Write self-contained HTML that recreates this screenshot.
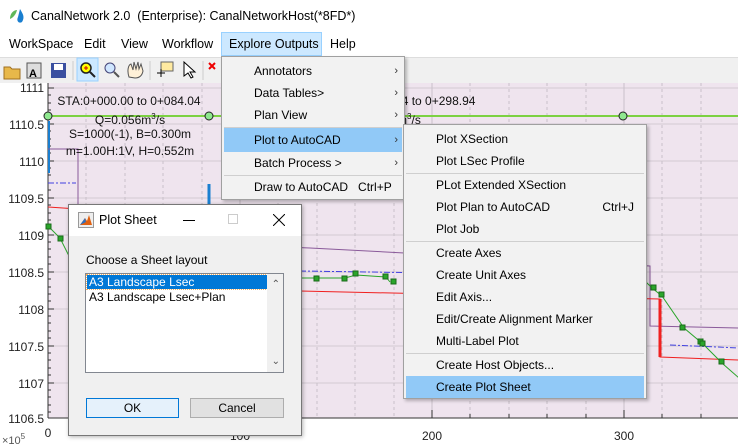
<!DOCTYPE html>
<html><head><meta charset="utf-8"><style>
*{margin:0;padding:0;box-sizing:border-box}
body{width:738px;height:445px;overflow:hidden;background:#fff;font-family:"Liberation Sans",sans-serif;font-size:12px;color:#000;position:relative}
.abs{position:absolute}
.menu{background:#f2f2f2;border:1px solid #a0a0a0;box-shadow:2px 2px 3px rgba(0,0,0,.25)}
.it{position:absolute;left:2px;right:2px;height:22px;line-height:22px;padding-left:30px;white-space:nowrap}
.hl{background:#91c9f7}
.sep{position:absolute;left:2px;right:2px;height:1px;background:#cfcfcf}
.arr{position:absolute;right:4px;top:0;color:#333;font-size:11px}
</style></head><body>
<div class="abs" style="left:0;top:0;width:738px;height:33px;background:#fff"></div>
<svg class="abs" style="left:8px;top:7px" width="18" height="18"><path d="M2 12 C2 5 7 3 9 3 C8 7 6 10 2 12Z" fill="#5fb85a"/><path d="M12 2 C15 7 17 10 14 15 C11 17 8 14 10 10 Z" fill="#1a7fd0"/></svg>
<div class="abs" style="left:31px;top:9px;font-size:12.5px">CanalNetwork 2.0&nbsp; (Enterprise): CanalNetworkHost(*8FD*)</div>
<div class="abs" style="left:0;top:33px;width:738px;height:24px;background:#fff"></div>
<div class="abs" style="left:221px;top:32px;width:101px;height:24px;background:#cce8ff;border:1px solid #99d1ff"></div>
<div class="abs" style="top:37px;left:9px;font-size:12.5px">WorkSpace</div>
<div class="abs" style="top:37px;left:84px;font-size:12.5px">Edit</div>
<div class="abs" style="top:37px;left:121px;font-size:12.5px">View</div>
<div class="abs" style="top:37px;left:162px;font-size:12.5px">Workflow</div>
<div class="abs" style="top:37px;left:229px;font-size:12.5px">Explore Outputs</div>
<div class="abs" style="top:37px;left:330px;font-size:12.5px">Help</div>
<div class="abs" style="left:0;top:57px;width:738px;height:26px;background:#f0f0f0;border-top:1px solid #ddd"></div>
<svg class="abs" style="left:0;top:57px" width="738" height="26">
<path d="M4 10h6l2 2h8v10H4z" fill="#e8b84a" stroke="#a07020"/>
<rect x="27" y="6" width="14" height="15" fill="#ddd" stroke="#555"/><text x="29" y="20" font-size="11" font-weight="bold" font-family="Liberation Sans">A</text>
<rect x="51" y="6" width="15" height="15" fill="#3a4fa0"/><rect x="54" y="7" width="9" height="6" fill="#fff"/>
<line x1="73" y1="4" x2="73" y2="23" stroke="#ccc"/>
<rect x="77" y="1" width="21" height="23" fill="#cce8ff" stroke="#99d1ff"/>
<circle cx="86" cy="11" r="5" fill="#ff0" stroke="#222" stroke-width="1.5"/><line x1="90" y1="15" x2="95" y2="20" stroke="#222" stroke-width="2"/><path d="M84 11h4M86 9v4" stroke="#c00"/>
<circle cx="110" cy="11" r="5" fill="#cfe6ff" stroke="#447"/><line x1="114" y1="15" x2="119" y2="20" stroke="#555" stroke-width="2"/>
<path d="M129 20 C127 14 128 8 131 7 L133 13 L134 5 L136 12 L138 5 L139 12 L141 7 L143 14 C142 19 139 21 135 21Z" fill="#fff1d8" stroke="#555"/>
<line x1="150" y1="4" x2="150" y2="23" stroke="#ccc"/>
<rect x="161" y="5" width="12" height="9" fill="#ffeaa0" stroke="#666"/><path d="M157 16h8M161 12v8" stroke="#000"/>
<path d="M184 5 L184 19 L188 16 L191 21 L193 20 L190 15 L195 15Z" fill="#fff" stroke="#000"/>
<line x1="203" y1="4" x2="203" y2="23" stroke="#ccc"/>
<path d="M209 6l6 6M215 6l-6 6" stroke="#e00" stroke-width="2"/>
</svg>
<svg class="abs" style="left:0;top:83px" width="738" height="362">
<rect x="48" y="0" width="690" height="335" fill="#efe4ee"/>
<g stroke="#d3cad3" stroke-width="1">
<line x1="48" x2="738" y1="5" y2="5"/><line x1="48" x2="738" y1="41" y2="41"/><line x1="48" x2="738" y1="78" y2="78"/><line x1="48" x2="738" y1="115" y2="115"/><line x1="48" x2="738" y1="152" y2="152"/><line x1="48" x2="738" y1="189" y2="189"/><line x1="48" x2="738" y1="226" y2="226"/><line x1="48" x2="738" y1="263" y2="263"/><line x1="48" x2="738" y1="300" y2="300"/>
</g>
<g stroke="#c9c0c9" stroke-dasharray="3,3">
<line x1="86" x2="86" y1="0" y2="335"/><line x1="125" x2="125" y1="0" y2="335"/><line x1="163" x2="163" y1="0" y2="335"/><line x1="202" x2="202" y1="0" y2="335"/><line x1="240" x2="240" y1="0" y2="335" stroke-dasharray="none"/><line x1="278" x2="278" y1="0" y2="335"/><line x1="317" x2="317" y1="0" y2="335"/><line x1="355" x2="355" y1="0" y2="335"/><line x1="394" x2="394" y1="0" y2="335"/><line x1="432" x2="432" y1="0" y2="335" stroke-dasharray="none"/><line x1="470" x2="470" y1="0" y2="335"/><line x1="509" x2="509" y1="0" y2="335"/><line x1="547" x2="547" y1="0" y2="335"/><line x1="586" x2="586" y1="0" y2="335"/><line x1="624" x2="624" y1="0" y2="335" stroke-dasharray="none"/><line x1="662" x2="662" y1="0" y2="335"/><line x1="701" x2="701" y1="0" y2="335"/>
</g>
<line x1="48" y1="0" x2="48" y2="335" stroke="#333"/>
<line x1="48" y1="335" x2="738" y2="335" stroke="#333"/>
<g stroke="#333"><path d="M48 5h6M48 12h3M48 20h3M48 27h3M48 34h3M48 41h6M48 48h3M48 56h3M48 63h3M48 70h3M48 78h6M48 85h3M48 92h3M48 100h3M48 107h3M48 115h6M48 122h3M48 130h3M48 137h3M48 144h3M48 152h6M48 159h3M48 166h3M48 174h3M48 181h3M48 189h6M48 196h3M48 204h3M48 211h3M48 218h3M48 226h6M48 233h3M48 240h3M48 248h3M48 255h3M48 263h6M48 270h3M48 277h3M48 285h3M48 292h3M48 300h6M48 307h3M48 314h3M48 322h3M48 329h3"/>
<path d="M240 335v-8M432 335v-8M624 335v-8M470 335v-4M509 335v-4M547 335v-4M586 335v-4M662 335v-4M701 335v-4"/></g>
<line x1="48" y1="33" x2="738" y2="33" stroke="#7cd142" stroke-width="2"/>
<circle cx="48" cy="33" r="4" fill="#8fe88f" stroke="#222"/><circle cx="209" cy="33" r="4" fill="#8fe88f" stroke="#222"/><circle cx="623" cy="33" r="4" fill="#8fe88f" stroke="#222"/>
<line x1="49" y1="38" x2="49" y2="90" stroke="#1a7fd0" stroke-width="2"/>
<line x1="209" y1="101" x2="209" y2="125" stroke="#1a7fd0" stroke-width="3"/>
<path d="M48 66h30v90L310 165l340 18v60l88 2" fill="none" stroke="#8a5a9a"/>
<path d="M48 100h28" stroke="#4040e0" stroke-dasharray="6,2,2,2"/>
<path d="M300 188l340 5M670 262l70 3" stroke="#4040e0" stroke-dasharray="6,2,2,2"/>
<path d="M48 124l30 2M300 208l360 8v58l78 3" fill="none" stroke="#f02020"/>
<path d="M660 216v58" stroke="#f02020" stroke-width="3"/>
<path d="M48 143l12 12l20 40M300 195l17 0l28 0l11-3l30 2l4 5M640 193l12 12l10 8l22 32l19 16l20 20l16 14" fill="none" stroke="#2aa52a"/>
<g fill="#2aa52a" stroke="#1a6a1a"><rect x="46" y="141" width="5" height="5"/><rect x="58" y="153" width="5" height="5"/><rect x="314" y="193" width="5" height="5"/><rect x="342" y="193" width="5" height="5"/><rect x="353" y="188" width="5" height="5"/><rect x="383" y="191" width="5" height="5"/><rect x="391" y="196" width="5" height="5"/><rect x="651" y="202" width="5" height="5"/><rect x="659" y="209" width="5" height="5"/><rect x="680" y="242" width="5" height="5"/><rect x="698" y="256" width="5" height="5"/><rect x="700" y="258" width="5" height="5"/><rect x="719" y="276" width="5" height="5"/></g>
<g font-family="Liberation Sans" font-size="12" text-anchor="end" fill="#222">
<text x="44" y="9">1111</text><text x="44" y="46">1110.5</text><text x="44" y="83">1110</text><text x="44" y="120">1109.5</text><text x="44" y="157">1109</text><text x="44" y="194">1108.5</text><text x="44" y="231">1108</text><text x="44" y="268">1107.5</text><text x="44" y="305">1107</text><text x="44" y="340">1106.5</text></g>
<g font-family="Liberation Sans" font-size="12" fill="#222" text-anchor="middle">
<text x="48" y="354">0</text><text x="240" y="357">100</text><text x="432" y="357">200</text><text x="624" y="357">300</text></g>
<text x="2" y="361" font-family="Liberation Sans" font-size="11" fill="#555">×10<tspan font-size="8" dy="-5">5</tspan></text>
<g font-family="Liberation Sans" font-size="12" fill="#111" text-anchor="middle">
<text x="129" y="22">STA:0+000.00 to 0+084.04</text>
<text x="130" y="41">Q=0.056m<tspan font-size="8" dy="-5">3</tspan><tspan dy="5">/s</tspan></text>
<text x="130" y="55">S=1000(-1), B=0.300m</text>
<text x="130" y="72">m=1.00H:1V, H=0.552m</text>
<text x="358" y="22" text-anchor="start">0+084.04 to 0+298.94</text>
<text x="367" y="41" text-anchor="start">0.050m<tspan font-size="8" dy="-5">3</tspan><tspan dy="5">/s</tspan></text>
</g>
</svg>
<div class="abs menu" style="left:221px;top:56px;width:184px;height:144px">
<div class="it" style="top:3px">Annotators<span class="arr">›</span></div>
<div class="it" style="top:25px">Data Tables&gt;<span class="arr">›</span></div>
<div class="it" style="top:47px">Plan View<span class="arr">›</span></div>
<div class="sep" style="top:70px"></div>
<div class="it hl" style="top:71px;height:24px;line-height:24px">Plot to AutoCAD<span class="arr">›</span></div>
<div class="it" style="top:95px">Batch Process &gt;<span class="arr">›</span></div>
<div class="sep" style="top:118px"></div>
<div class="it" style="top:119px">Draw to AutoCAD&nbsp;&nbsp; Ctrl+P</div>
</div>
<div class="abs menu" style="left:403px;top:124px;width:244px;height:275px">
<div class="it" style="top:3px">Plot XSection</div>
<div class="it" style="top:25px">Plot LSec Profile</div>
<div class="sep" style="top:48px"></div>
<div class="it" style="top:49px">PLot Extended XSection</div>
<div class="it" style="top:71px">Plot Plan to AutoCAD<span style="position:absolute;right:10px">Ctrl+J</span></div>
<div class="it" style="top:93px">Plot Job</div>
<div class="sep" style="top:116px"></div>
<div class="it" style="top:117px">Create Axes</div>
<div class="it" style="top:139px">Create Unit Axes</div>
<div class="it" style="top:161px">Edit Axis...</div>
<div class="it" style="top:183px">Edit/Create Alignment Marker</div>
<div class="it" style="top:205px">Multi-Label Plot</div>
<div class="sep" style="top:228px"></div>
<div class="it" style="top:229px">Create Host Objects...</div>
<div class="it hl" style="top:251px">Create Plot Sheet</div>
</div>
<div class="abs" style="left:68px;top:204px;width:234px;height:232px;background:#f0f0f0;border:1px solid #777;box-shadow:1px 1px 4px rgba(0,0,0,.3)">
<div class="abs" style="left:0;top:0;width:232px;height:31px;background:#fff"></div>
<svg class="abs" style="left:9px;top:7px" width="16" height="16"><rect x="0.5" y="0.5" width="15" height="15" fill="#eee" stroke="#999"/><path d="M2 13 L7 6 L9 9 L11 3 L14 13Z" fill="#e06010"/><path d="M2 13 L7 6 L8 10Z" fill="#3070c0"/></svg>
<div class="abs" style="left:30px;top:8px;font-size:12.5px">Plot Sheet</div>
<div class="abs" style="left:114px;top:15px;width:12px;height:1px;background:#000"></div>
<div class="abs" style="left:159px;top:9px;width:10px;height:10px;border:1px solid #ccc"></div>
<svg class="abs" style="left:204px;top:9px" width="12" height="12"><path d="M0 0L12 12M12 0L0 12" stroke="#000"/></svg>
<div class="abs" style="left:17px;top:48px">Choose a Sheet layout</div>
<div class="abs" style="left:16px;top:68px;width:199px;height:100px;background:#fff;border:1px solid #828790">
<div class="abs" style="left:1px;top:1px;width:180px;height:14px;background:#0078d7;color:#fff;outline:1px dotted #f5b060;line-height:14px;padding-left:2px">A3 Landscape Lsec</div>
<div class="abs" style="left:3px;top:16px;line-height:14px">A3 Landscape Lsec+Plan</div>
<div class="abs" style="right:0;top:0;width:16px;height:98px;background:#f0f0f0"></div>
<div class="abs" style="right:3px;top:5px;font-size:10px;color:#555">⌃</div>
<div class="abs" style="right:3px;top:82px;font-size:10px;color:#555">⌄</div>
</div>
<div class="abs" style="left:17px;top:193px;width:93px;height:20px;background:#e5f1fb;border:1px solid #0078d7;text-align:center;line-height:18px">OK</div>
<div class="abs" style="left:121px;top:193px;width:94px;height:20px;background:#e1e1e1;border:1px solid #adadad;text-align:center;line-height:18px">Cancel</div>
</div>
</body></html>
